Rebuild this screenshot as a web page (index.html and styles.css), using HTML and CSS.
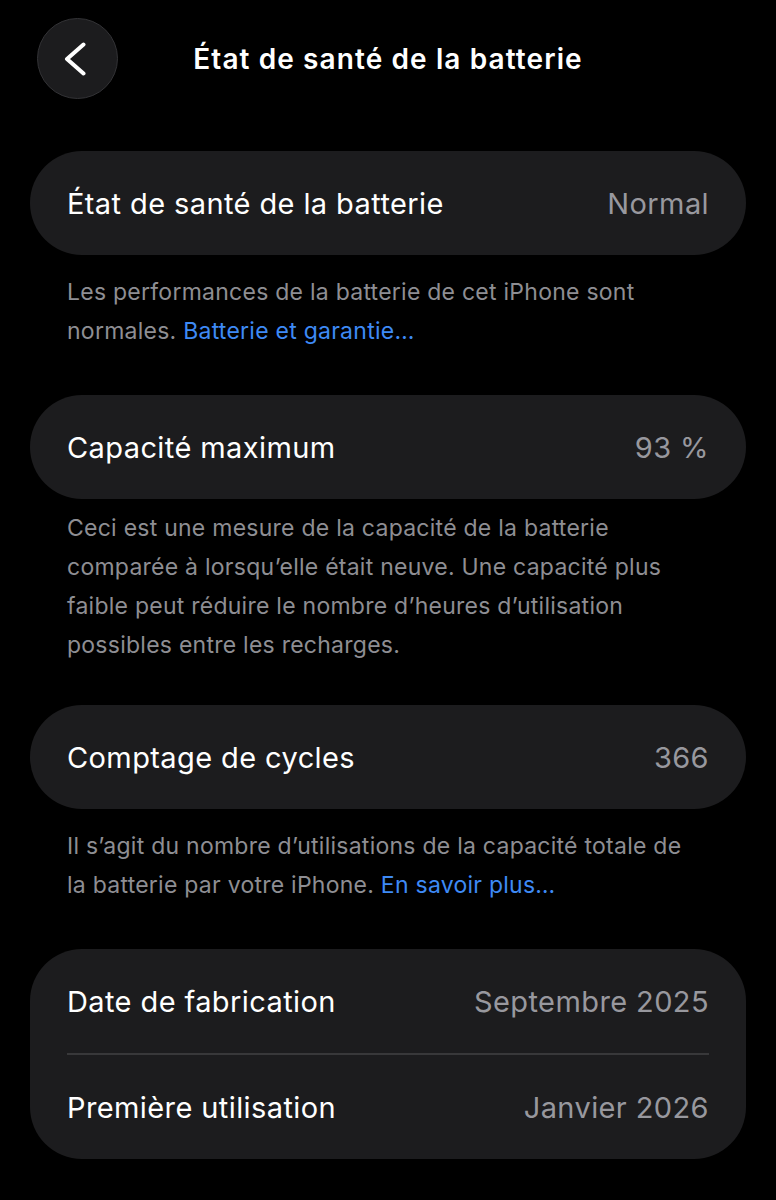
FILE: index.html
```html
<!DOCTYPE html>
<html lang="fr">
<head>
<meta charset="utf-8">
<title>État de santé de la batterie</title>
<link rel="stylesheet" href="styles.css">
</head>
<body>
<div class="screen">
  <header class="nav">
    <div class="nav-left">
      <button class="back" aria-label="Retour">
        <svg width="24" height="34" viewBox="0 0 24 34"><path d="M20.5 2.5 L4 17 L20.5 31.5" fill="none" stroke="#fff" stroke-width="4" stroke-linecap="round" stroke-linejoin="round"/></svg>
      </button>
    </div>
    <h1 class="nav-title">État de santé de la batterie</h1>
    <div class="nav-right"></div>
  </header>

  <section class="group group-first">
    <div class="row"><span class="label">État de santé de la batterie</span><span class="value">Normal</span></div>
  </section>
  <p class="footer footer-a">Les performances de la batterie de cet iPhone sont normales. <span class="link">Batterie et garantie…</span></p>

  <section class="group">
    <div class="row"><span class="label">Capacité maximum</span><span class="value">93 %</span></div>
  </section>
  <p class="footer footer-b">Ceci est une mesure de la capacité de la batterie comparée à lorsqu’elle était neuve. Une capacité plus faible peut réduire le nombre d’heures d’utilisation possibles entre les recharges.</p>

  <section class="group">
    <div class="row"><span class="label">Comptage de cycles</span><span class="value">366</span></div>
  </section>
  <p class="footer footer-a">Il s’agit du nombre d’utilisations de la capacité totale de la batterie par votre iPhone. <span class="link">En savoir plus…</span></p>

  <section class="group">
    <div class="row"><span class="label">Date de fabrication</span><span class="value">Septembre 2025</span></div>
    <div class="divider"></div>
    <div class="row"><span class="label">Première utilisation</span><span class="value">Janvier 2026</span></div>
  </section>
</div>
</body>
</html>
```
FILE: styles.css
```css
html, body {
  margin: 0;
  padding: 0;
  background: #000;
}
body {
  font-family: Inter, "Noto Sans", sans-serif;
  color: #fff;
}
.screen {
  width: 776px;
  height: 1200px;
  overflow: hidden;
  display: flex;
  flex-direction: column;
}
.nav {
  display: grid;
  grid-template-columns: 1fr auto 1fr;
  align-items: center;
  height: 81px;
  margin-top: 18px;
  padding: 0 37px;
}
.nav-left { display: flex; }
.back {
  width: 81px;
  height: 81px;
  border-radius: 50%;
  background: #1c1c1e;
  border: 1.5px solid #333336;
  box-sizing: border-box;
  display: flex;
  align-items: center;
  justify-content: center;
  padding: 0 5px 0 0;
  cursor: pointer;
}
.nav-title {
  margin: 0;
  font-size: 28px;
  font-weight: 600;
  letter-spacing: 1.1px;
  color: #fff;
}
.group {
  margin: 0 30px;
  background: #1c1c1e;
  border-radius: 52px;
  padding: 0 37px;
}
.group-first { margin-top: 52px; }
.row {
  height: 104px;
  display: flex;
  align-items: center;
  justify-content: space-between;
  font-size: 29px;
  letter-spacing: 0.4px;
}
.label { color: #fff; }
.value { color: #98989e; }
.divider {
  height: 2px;
  background: #38383a;
}
.footer {
  margin: 0 80px 0 67px;
  font-size: 23px;
  line-height: 39px;
  color: #8e8e93;
  letter-spacing: 0.25px;
}
.footer-a { padding: 18px 0 44px; }
.footer-b { padding: 10px 0 40px; }
.link { color: #3e8af5; }
```
